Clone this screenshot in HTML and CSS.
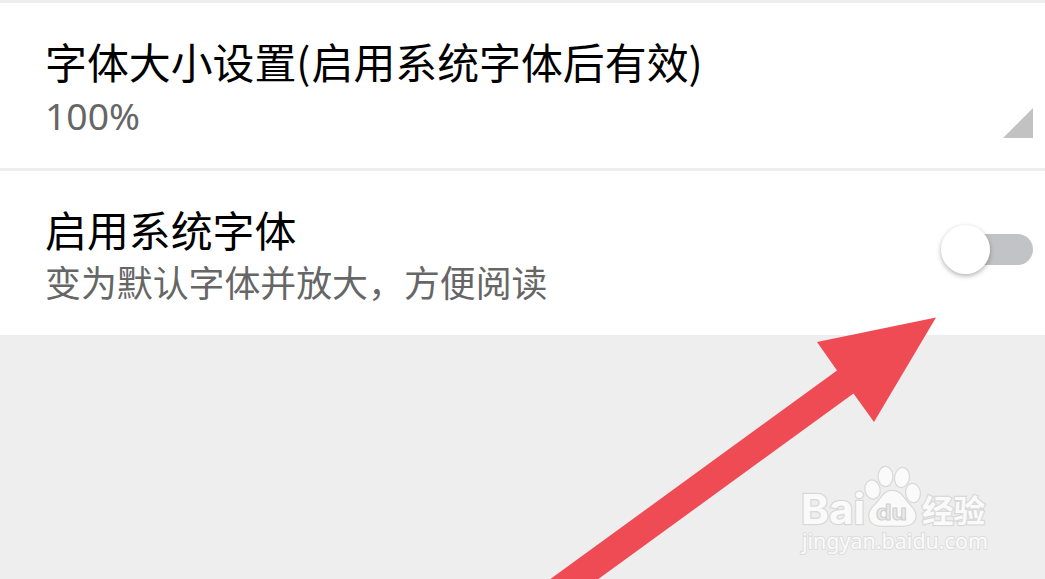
FILE: index.html
```html
<!DOCTYPE html>
<html lang="zh-CN">
<head>
    <meta charset="UTF-8">
    <meta name="viewport" content="width=device-width, initial-scale=1.0">
    <title>字体设置</title>
    <link rel="stylesheet" href="styles.css">
</head>
<body>
    <main class="settings">
        <div class="setting-row">
            <div class="setting-text">
                <h2>字体大小设置<span class="paren">(</span>启用系统字体后有效)</h2>
                <p class="setting-value">100%</p>
            </div>
            <span class="spinner-corner"></span>
        </div>
        <div class="setting-row">
            <div class="setting-text">
                <h2>启用系统字体</h2>
                <p>变为默认字体并放大，方便阅读</p>
            </div>
            <div class="switch" role="switch" aria-checked="false">
                <span class="switch-thumb"></span>
            </div>
        </div>
    </main>

    <!-- arrow pointing at the switch -->
    <svg class="arrow" viewBox="0 0 1045 579">
        <path d="M936 317.5 L817 342 L837 370.5 L549 580 H597 L853.5 393.5 L874 422 Z"/>
    </svg>

    <svg class="watermark" viewBox="0 0 230 110">
        <g class="watermark-shape">
            <text class="logo-latin" x="21" y="69" textLength="64" lengthAdjust="spacingAndGlyphs">Bai</text>
            <ellipse cx="92.500" cy="34.500" rx="7" ry="9" transform="rotate(-12 92.500 34.500)"/>
            <ellipse cx="105.500" cy="21.500" rx="6.800" ry="9.500"/>
            <ellipse cx="122" cy="22.500" rx="6.800" ry="9.500" transform="rotate(10 122 22.500)"/>
            <ellipse cx="133" cy="38" rx="6.800" ry="9" transform="rotate(-8 133 38)"/>
            <path d="M112 36 C104 36 102 43 97 48 C92 53 88 57 90 64 C92 71 100 71 112 70.500 C125 71 132 71 135 64 C137 57 132 53 127 47 C122 41 120 36 112 36 Z"/>
            <text class="logo-cjk" x="142" y="66.500" textLength="63" lengthAdjust="spacingAndGlyphs">经验</text>
            <text class="logo-url" x="22" y="94" textLength="186" lengthAdjust="spacingAndGlyphs">jingyan.baidu.com</text>
        </g>
        <text class="logo-du" x="96" y="65" textLength="31" lengthAdjust="spacingAndGlyphs">du</text>
    </svg>
</body>
</html>
```

FILE: styles.css
```css
* {
    margin: 0;
    padding: 0;
    box-sizing: border-box;
}

body {
    position: relative;
    height: 579px;
    overflow: hidden;
    background-color: #eeeeee;
    font-family: 'Noto Sans CJK SC', sans-serif;
}

.settings {
    display: flex;
    flex-direction: column;
    gap: 3px;
    padding-top: 3px;
}

.setting-row {
    display: flex;
    justify-content: space-between;
    height: 165px;
    padding: 32px 12px 0 45px;
    background-color: #fff;
}

.setting-row:last-child {
    height: 164px;
}

.setting-row h2 {
    color: #000;
    font-size: 41.9px;
    font-weight: 400;
    line-height: 52px;
    white-space: nowrap;
}

.paren {
    letter-spacing: 1px;
}

.setting-row p {
    color: #666;
    font-size: 35.9px;
    line-height: 52px;
    white-space: nowrap;
}

.setting-row .setting-value {
    padding-top: 3px;
    font-family: 'Noto Sans', sans-serif;
    font-size: 37.3px;
}

.spinner-corner {
    width: 30px;
    height: 30px;
    margin-top: 73px;
    background-color: #c2c2c2;
    clip-path: polygon(100% 0, 100% 100%, 0 100%);
}

.switch {
    display: flex;
    align-items: center;
    width: 80px;
    height: 31px;
    margin-top: 31px;
    border-radius: 16px;
    background-color: #c2c3c7;
}

.switch-thumb {
    flex: none;
    width: 49px;
    height: 49px;
    margin-left: -12px;
    border-radius: 50%;
    background-color: #fff;
    box-shadow: 0 2px 5px rgba(0, 0, 0, 0.3);
}

.arrow {
    position: absolute;
    top: 0;
    left: 0;
    width: 1045px;
    height: 579px;
    fill: #ef4b55;
}

.watermark {
    position: absolute;
    top: 455px;
    left: 780px;
    width: 230px;
    height: 110px;
}

.watermark-shape {
    fill: #fafafa;
    stroke: #d9d9d9;
    stroke-width: 2.5px;
    paint-order: stroke;
}

.logo-latin,
.logo-du {
    font-family: 'Inter', sans-serif;
    font-weight: 700;
}

.logo-latin {
    font-size: 41px;
}

.logo-du {
    font-size: 22px;
    fill: #e8e8e8;
    stroke: #cfcfcf;
    stroke-width: 1px;
}

.logo-cjk {
    font-size: 31px;
    font-weight: 700;
}

.logo-url {
    font-family: 'Noto Sans', sans-serif;
    font-size: 22px;
    stroke: #dddddd;
    stroke-width: 2px;
}
```
